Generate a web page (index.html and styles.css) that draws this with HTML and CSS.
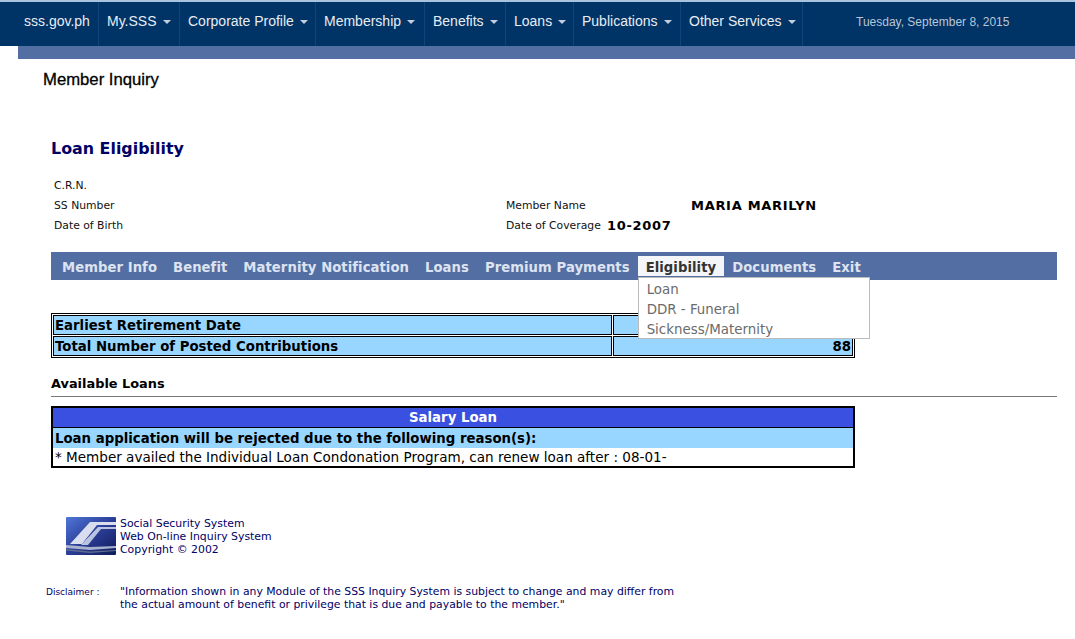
FILE: index.html
```html
<!DOCTYPE html>
<html lang="en">
<head>
<meta charset="utf-8">
<title>Member Inquiry</title>
<link rel="stylesheet" href="styles.css">
</head>
<body>
<div class="topstrip"></div>
<nav class="sitenav">
  <a class="sn sn-home">sss.gov.ph</a>
  <a class="sn sn-my">My.SSS<i class="caret"></i></a>
  <a class="sn sn-corp">Corporate Profile<i class="caret"></i></a>
  <a class="sn sn-mem">Membership<i class="caret"></i></a>
  <a class="sn sn-ben">Benefits<i class="caret"></i></a>
  <a class="sn sn-loan">Loans<i class="caret"></i></a>
  <a class="sn sn-pub">Publications<i class="caret"></i></a>
  <a class="sn sn-oth">Other Services<i class="caret"></i></a>
  <span class="navdate">Tuesday, September 8, 2015</span>
</nav>
<div class="subbar"></div>
<h1 class="pagetitle">Member Inquiry</h1>
<main class="content">
  <h2 class="loantitle">Loan Eligibility</h2>
  <div class="info">
    <div class="inforow"><span class="lbl lbl-a">C.R.N.</span></div>
    <div class="inforow"><span class="lbl lbl-a">SS Number</span><span class="lbl lbl-b">Member Name</span><strong class="val val-name">MARIA MARILYN</strong></div>
    <div class="inforow"><span class="lbl lbl-a">Date of Birth</span><span class="lbl lbl-b lbl-cov">Date of Coverage</span><strong class="val">10-2007</strong></div>
  </div>
  <div class="tabs">
    <a class="tab">Member Info</a>
    <a class="tab">Benefit</a>
    <a class="tab">Maternity Notification</a>
    <a class="tab">Loans</a>
    <a class="tab">Premium Payments</a>
    <div class="tabwrap">
      <a class="tab tab-active">Eligibility</a>
      <div class="dropdown">
        <a>Loan</a>
        <a>DDR - Funeral</a>
        <a>Sickness/Maternity</a>
      </div>
    </div>
    <a class="tab">Documents</a>
    <a class="tab">Exit</a>
  </div>
  <table class="t1">
    <tr><th class="c1">Earliest Retirement Date</th><td class="c2"></td></tr>
    <tr><th class="c1">Total Number of Posted Contributions</th><td class="c2">88</td></tr>
  </table>
  <div class="avail">Available Loans</div>
  <table class="t2">
    <tr><th class="t2head">Salary Loan</th></tr>
    <tr><th class="t2sub">Loan application will be rejected due to the following reason(s):</th></tr>
    <tr><td class="t2row">* Member availed the Individual Loan Condonation Program, can renew loan after : 08-01-</td></tr>
  </table>
  <div class="org">
    <svg class="logo" viewBox="0 0 50 38" aria-hidden="true">
      <defs>
        <linearGradient id="lg" x1="0" y1="0" x2="1" y2="1">
          <stop offset="0" stop-color="#4f76d8"/>
          <stop offset="0.5" stop-color="#2c3f98"/>
          <stop offset="1" stop-color="#0f1a58"/>
        </linearGradient>
      </defs>
      <rect width="50" height="38" rx="1" fill="url(#lg)"/>
      <path d="M4 27 L24 5 L50 5 L50 8 L31 8 L16 27 Z" fill="#d8deee"/>
      <path d="M15 28 L32 10 L50 10 L50 12 L35 12 L22 28 Z" fill="#b9c4e0"/>
      <path d="M0 28 L24 30 L50 29 L50 31 L24 33 L0 31 Z" fill="#a8b2cf"/>
      <path d="M0 32 L24 34.500 L50 33 L50 34 L24 36 L0 33.500 Z" fill="#5f6c90"/>
    </svg>
    <div class="orgtext">Social Security System<br>Web On-line Inquiry System<br>Copyright © 2002</div>
  </div>
  <div class="disc">
    <span class="disclabel">Disclaimer :</span>
    <p class="disctext">"Information shown in any Module of the SSS Inquiry System is subject to change and may differ from<br>the actual amount of benefit or privilege that is due and payable to the member."</p>
  </div>
</main>
</body>
</html>
```
FILE: styles.css
```css
html, body { margin: 0; padding: 0; background: #fff; }
body { font-family: "DejaVu Sans", Verdana, sans-serif; overflow: hidden; height: 639px; color: #000; }
.topstrip { height: 2px; background: #a9c4e0; }
.sitenav { display: flex; align-items: stretch; height: 44px; background: #003366; font-family: "Liberation Sans", Arial, sans-serif; }
.sn { display: flex; align-items: center; box-sizing: border-box; height: 44px; padding-left: 8px; padding-bottom: 7px; color: #e8edf4; font-size: 14px; border-right: 1px solid #11457a; }
.sn-home { width: 99px; padding-left: 24px; }
.sn-my { width: 81px; }
.sn-corp { width: 136px; }
.sn-mem { width: 109px; }
.sn-ben { width: 81px; }
.sn-loan { width: 68px; }
.sn-pub { width: 107px; }
.sn-oth { width: 122px; }
.caret { display: inline-block; width: 0; height: 0; margin-left: 6px; margin-top: 2px; border-left: 4px solid transparent; border-right: 4px solid transparent; border-top: 4px solid #c3cede; }
.navdate { display: flex; align-items: center; box-sizing: border-box; height: 44px; padding-left: 53px; padding-bottom: 5px; color: #b9c6d8; font-size: 12px; }
.subbar { height: 13px; margin-left: 18px; background: #536ea3; }
.pagetitle { margin: 12px 0 0 43px; font: normal 16.7px/17px "Liberation Sans", Arial, sans-serif; -webkit-text-stroke: 0.3px #000; color: #000; }
.content { margin-left: 51px; width: 1006px; }
.loantitle { margin: 51px 0 0; font-size: 15.9px; line-height: 20px; font-weight: bold; color: #000066; }
.info { margin: 16px 0 0 3px; }
.inforow { display: flex; align-items: center; height: 20px; }
.lbl { font-size: 10.8px; color: #111; }
.lbl-a { width: 452px; }
.lbl-b { width: 185px; }
.lbl-cov { width: 101px; }
.val { font-size: 13px; letter-spacing: 0.7px; }
.tabs { display: flex; align-items: flex-start; box-sizing: border-box; height: 28px; margin-top: 17px; padding: 4px 0 0 3px; background: #536ea3; }
.tab { display: block; height: 20px; padding: 0 8px; font-size: 13.2px; letter-spacing: 0.06px; line-height: 23px; font-weight: bold; color: #dde3f0; white-space: nowrap; }
.tabwrap { position: relative; }
.tab-active { background: #f4f5f8; color: #333; }
.dropdown { position: absolute; left: 0; top: 21px; box-sizing: border-box; width: 232px; height: 62px; padding-top: 2px; background: #fff; border: 1px solid #bbb; z-index: 2; }
.dropdown a { display: block; height: 20px; padding-left: 8px; font-size: 13.4px; line-height: 20px; color: #6b6b6b; white-space: nowrap; }
table { border-collapse: separate; }
.t1 { width: 804px; margin-top: 33px; border: 1px solid #000; border-spacing: 1px; padding: 0; }
.t1 th, .t1 td { height: 17px; padding: 1px 1px 0; background: #99d6ff; border: 1px solid #000; font-size: 13.3px; line-height: 17px; font-weight: bold; color: #000; }
.c1 { width: 555px; text-align: left; }
.c2 { text-align: right; }
.avail { box-sizing: border-box; height: 23px; margin-top: 16px; padding-top: 1px; border-bottom: 1px solid #777; font-size: 12.9px; line-height: 18px; font-weight: bold; }
.t2 { width: 804px; margin-top: 9px; border: 2px solid #000; border-spacing: 0; }
.t2 th, .t2 td { padding: 0 2px; font-size: 13.3px; height: 19px; line-height: 18px; }
.t2head { background: #3a50e0; color: #fff; border-bottom: 1px solid #000; }
.t2 .t2sub { height: 18px; padding-top: 2px; background: #99d6ff; text-align: left; }
.t2 .t2row { height: 18px; background: #fff; font-size: 13.55px; }
.org { display: flex; margin: 49px 0 0 15px; }
.logo { display: block; width: 50px; height: 38px; margin-right: 4px; }
.orgtext { font-size: 10.9px; line-height: 13px; color: #000066; }
.disc { display: flex; margin: 29px 0 0 -5px; color: #000066; }
.disclabel { width: 74px; font-size: 9px; line-height: 13px; padding-top: 1px; }
.disctext { margin: 0; font-size: 10.85px; line-height: 13px; white-space: nowrap; }
```
